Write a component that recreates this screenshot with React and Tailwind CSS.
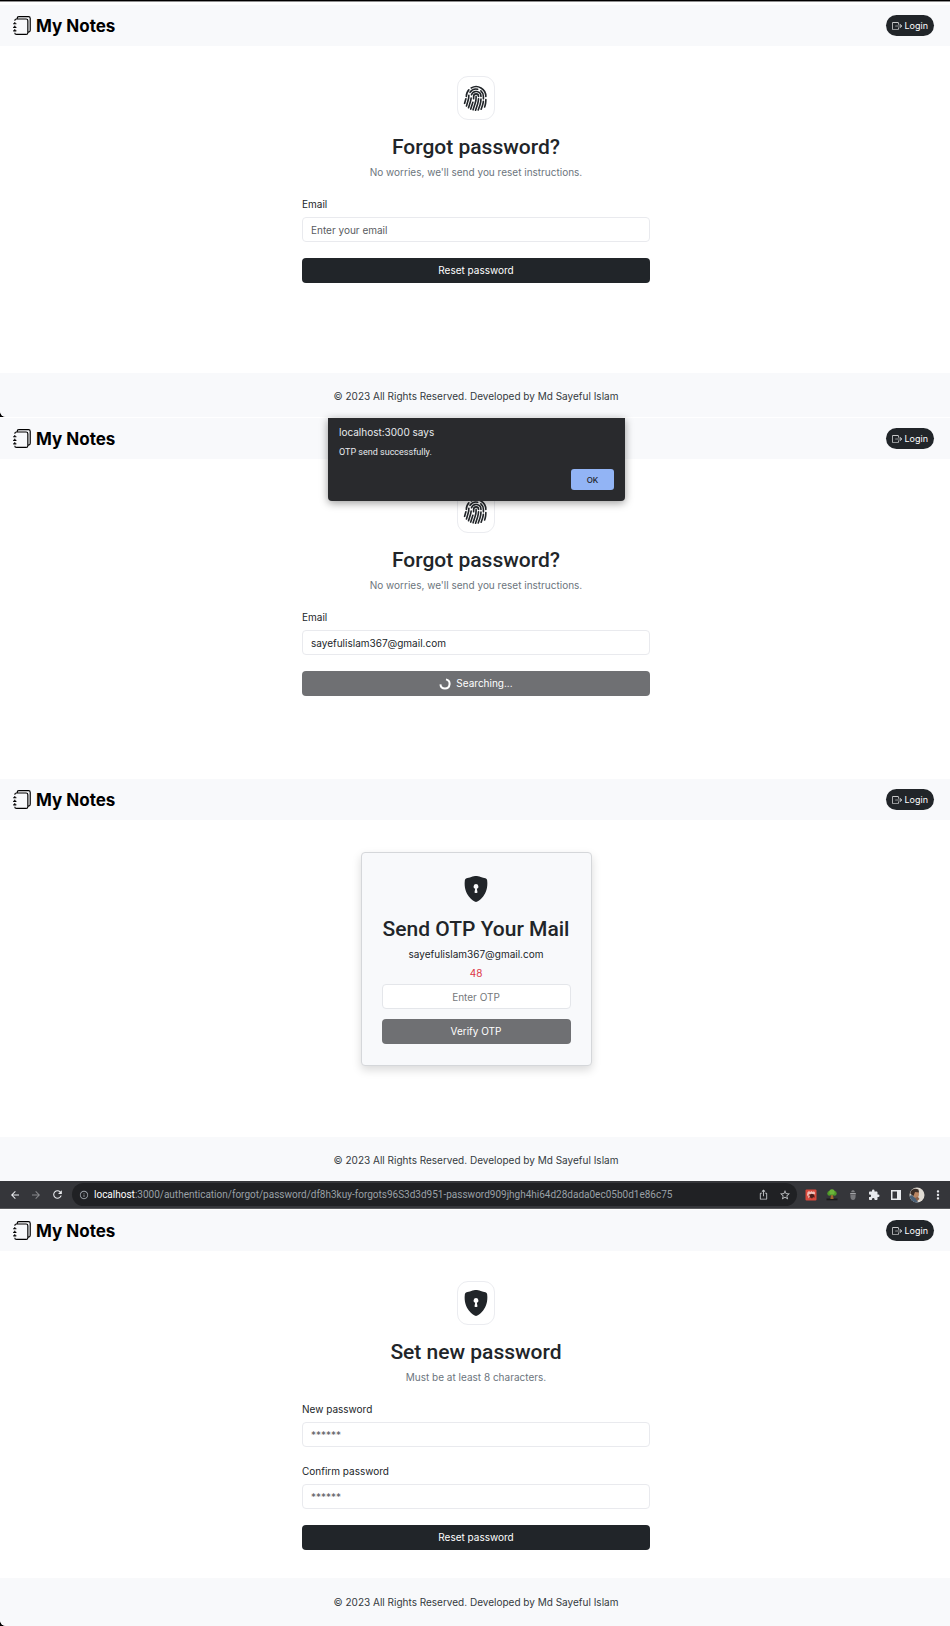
import { useId } from "react";
import { BsJournals, BsBoxArrowRight, BsFingerprint, BsShieldLockFill } from "react-icons/bs";
import {
  MdArrowBack,
  MdArrowForward,
  MdRefresh,
  MdInfoOutline,
  MdOutlineIosShare,
  MdStarBorder,
  MdMoreVert,
  MdExtension,
} from "react-icons/md";

function Header() {
  return (
    <header className="flex h-[41px] items-center justify-between bg-[#f8f9fb] pr-4 pl-[13px]">
      <a href="#home" className="flex items-center gap-1 text-[17px] leading-6 font-bold text-black">
        <BsJournals className="size-[19px]" />
        My Notes
      </a>
      <button
        type="button"
        className="flex h-[21px] items-center gap-[2px] rounded-full bg-[#212529] px-[6px] text-[9px] leading-4 text-white"
      >
        <BsBoxArrowRight className="size-[10px]" />
        Login
      </button>
    </header>
  );
}

function Footer({ className = "" }) {
  return (
    <footer
      className={`flex items-center justify-center bg-[#f8f9fb] pl-[2px] text-[10px] leading-4 text-[#343a40] ${className}`}
    >
      © 2023 All Rights Reserved. Developed by Md Sayeful Islam
    </footer>
  );
}

function IconTile({ children }) {
  return (
    <div className="flex h-[44px] w-[38px] items-center justify-center rounded-[11px] border border-[#ebecf0] text-[#212529]">
      {children}
    </div>
  );
}

function Title({ children }) {
  return (
    <h1 className="font-['Roboto',sans-serif] text-[21px] leading-7 font-medium whitespace-nowrap text-[#212529]">
      {children}
    </h1>
  );
}

function Field({ label, ...props }) {
  const id = useId();
  return (
    <div className="flex flex-col gap-1">
      <label htmlFor={id} className="text-[10px] leading-[18px] text-[#212529]">
        {label}
      </label>
      <input
        id={id}
        className="h-[25px] w-full rounded-[4px] border border-[#e9eaee] bg-white px-2 text-[10px] text-[#212529] placeholder:text-[#595c5f]"
        {...props}
      />
    </div>
  );
}

function SolidButton({ muted, children }) {
  return (
    <button
      type="button"
      className={`flex h-[25px] w-full items-center justify-center gap-[5px] rounded-[4px] text-[10px] text-white ${
        muted ? "bg-[#6f7073]" : "bg-[#212529]"
      }`}
    >
      {children}
    </button>
  );
}

function Panel({ icon, title, subtitle, className = "", children }) {
  return (
    <main className={`flex flex-col items-center bg-white pt-[30px] pr-4 pl-[18px] ${className}`}>
      <IconTile>{icon}</IconTile>
      <div className="mt-[13px] flex flex-col items-center gap-[3px]">
        <Title>{title}</Title>
        <p className="text-[10px] leading-4 text-[#6c757d]">{subtitle}</p>
      </div>
      <form className="mt-[15px] flex w-full max-w-[348px] flex-col">{children}</form>
    </main>
  );
}

function Spinner() {
  return (
    <svg viewBox="0 0 12 12" className="size-3" fill="none" stroke="currentColor" strokeWidth="2">
      <path d="M7 1.4A4.6 4.6 0 1 1 1.4 6.4" />
    </svg>
  );
}

function AlertDialog() {
  return (
    <div className="absolute inset-x-0 top-0 flex justify-center pl-[3px]">
      <div
        role="alertdialog"
        aria-label="localhost:3000 says"
        className="flex w-[297px] flex-col rounded-b-[4px] bg-[#292a2d] px-[11px] pt-[6px] pb-[11px] text-[#e8eaed] shadow-[0_2px_9px_rgba(0,0,0,0.4)]"
      >
        <p className="text-[10px] leading-4">localhost:3000 says</p>
        <p className="mt-[5px] font-['Roboto',sans-serif] text-[9px] leading-[14px]">OTP send successfully.</p>
        <button
          type="button"
          className="mt-[10px] h-[21px] w-[43px] self-end rounded-[3px] bg-[#92b4f5] text-[8px] font-medium text-[#202124]"
        >
          OK
        </button>
      </div>
    </div>
  );
}

function RedExtension() {
  return (
    <svg viewBox="0 0 12 12" className="size-3">
      <rect x=".5" y=".5" width="11" height="11" rx="1" fill="#d9493c" />
      <path d="M2.5 3.2 4 2l1.2 1L6.500 2l1.200 1L9 2.200l1.200 1.800L9.500 5.500 4 5 3 7.500 2 6z" fill="#f0c0b8" />
      <path d="M4.500 6 6.500 4.800 9 5.600 9.800 8.500 8 8.200 7 9.800 5.800 8.600 4.200 9.200z" fill="#4a1f1c" />
      <path d="M3 8l1-2 .8 1.600-.8 2z" fill="#f0c0b8" />
    </svg>
  );
}

function TreeExtension() {
  return (
    <svg viewBox="0 0 12 12" className="size-3">
      <path d="M.5 9.500h11v1.800H.5z" fill="#1b1b1b" />
      <path d="M5 6h2l.6 4H4.400z" fill="#a0682f" />
      <circle cx="3.600" cy="4.400" r="2.300" fill="#4f9a28" />
      <circle cx="8.400" cy="4.400" r="2.300" fill="#4f9a28" />
      <circle cx="6" cy="3" r="2.700" fill="#6cb53a" />
    </svg>
  );
}

function BugExtension() {
  return (
    <svg viewBox="0 0 12 12" className="size-3">
      <path d="M4.200 3.200C4.200 1.800 5 1.200 6 1.200s1.800.6 1.800 2z" fill="#7d7e81" />
      <path d="M3.200 4h5.600v1.400H3.200z" fill="#a4a5a8" />
      <path d="M3.400 6h5.200c.3 3-.8 5-2.600 5S3.100 9 3.400 6z" fill="#77787b" />
    </svg>
  );
}

function SidePanelIcon() {
  return (
    <svg viewBox="0 0 12 12" className="size-3" fill="#e8eaed">
      <path d="M1 1h10v10H1zM2.500 2.500v7h4.500v-7z" fillRule="evenodd" />
    </svg>
  );
}

function Avatar() {
  return (
    <svg viewBox="0 0 16 16" className="size-4">
      <clipPath id="avatar-round">
        <circle cx="8" cy="8" r="7.500" />
      </clipPath>
      <g clipPath="url(#avatar-round)">
        <rect width="16" height="16" fill="#e0dbd3" />
        <path d="M0 16V9l3-1 5 4 1 4z" fill="#4a6076" />
        <ellipse cx="7" cy="7" rx="3" ry="3.800" fill="#b98562" />
        <path d="M1.500 7c-1-4 4-6.500 8-4.500l.5 3L6 5 4.500 9z" fill="#3a2d27" />
        <path d="M6 10.500l3-.5 1.500 2-2.500 2z" fill="#8c5f44" />
      </g>
    </svg>
  );
}

function BrowserBar() {
  return (
    <nav className="flex h-7 items-center border-b border-[#5a5b5e] bg-[#35363a] pr-px pl-[9px] text-[#e8eaed]">
      <div className="flex items-center gap-[9px]">
        <button type="button" aria-label="Back">
          <MdArrowBack className="size-3" />
        </button>
        <button type="button" aria-label="Forward" className="text-[#87888b]">
          <MdArrowForward className="size-3" />
        </button>
        <button type="button" aria-label="Reload">
          <MdRefresh className="size-[13px]" />
        </button>
      </div>
      <div className="ml-2 flex h-[23px] flex-1 items-center rounded-full bg-[#202124] pr-[6px] pl-[7px]">
        <MdInfoOutline className="size-[10px] text-[#9aa0a6]" />
        <span className="ml-[5px] flex-1 font-['Roboto',sans-serif] text-[10px] leading-4 text-[#9aa0a6]">
          <span className="text-white">localhost</span>
          :3000/authentication/forgot/password/df8h3kuy-forgots96S3d3d951-password909jhgh4hi64d28dada0ec05b0d1e86c75
        </span>
        <div className="flex items-center gap-[10px] text-[#c4c7ca]">
          <MdOutlineIosShare className="size-[11px]" />
          <MdStarBorder className="size-3" />
        </div>
      </div>
      <div className="ml-[3px] grid w-[149px] grid-cols-7 place-items-center">
        <RedExtension />
        <TreeExtension />
        <BugExtension />
        <MdExtension className="size-3" />
        <SidePanelIcon />
        <Avatar />
        <MdMoreVert className="size-[14px]" />
      </div>
    </nav>
  );
}

export default function App() {
  return (
    <div className="bg-white font-['Inter',sans-serif]">
      <section className="bg-black pt-px">
        <div className="overflow-hidden rounded-bl-[6px] bg-white">
          <div className="border-t border-[#8f8f8f] pt-[3px]">
            <Header />
          </div>
          <Panel
            icon={<BsFingerprint className="size-[26px]" />}
            title="Forgot password?"
            subtitle="No worries, we'll send you reset instructions."
            className="pb-[90px]"
          >
            <Field label="Email" type="email" placeholder="Enter your email" />
            <div className="mt-4">
              <SolidButton>Reset password</SolidButton>
            </div>
          </Panel>
          <Footer className="pt-[15px] pb-[13px]" />
        </div>
      </section>

      <section className="relative border-t border-white">
        <Header />
        <Panel
          icon={<BsFingerprint className="size-[26px]" />}
          title="Forgot password?"
          subtitle="No worries, we'll send you reset instructions."
          className="pb-[83px]"
        >
          <Field label="Email" type="email" defaultValue="sayefulislam367@gmail.com" />
          <div className="mt-4">
            <SolidButton muted>
              <Spinner />
              Searching...
            </SolidButton>
          </div>
        </Panel>
        <AlertDialog />
      </section>

      <section>
        <Header />
        <main className="flex justify-center bg-white pt-8 pr-4 pb-[71px] pl-[18px]">
          <form className="flex w-[231px] flex-col items-center rounded-[4px] border border-[#d5d7da] bg-[#f8f9fb] px-5 pt-[23px] pb-[21px] shadow-[0_4px_10px_rgba(0,0,0,0.15)]">
            <BsShieldLockFill className="size-[26px] text-[#212529]" />
            <div className="mt-[13px]">
              <Title>Send OTP Your Mail</Title>
            </div>
            <p className="mt-[3px] text-[10px] leading-4 text-[#212529]">sayefulislam367@gmail.com</p>
            <p className="mt-[3px] text-[10px] leading-4 text-[#dc3545]">48</p>
            <input
              aria-label="OTP"
              placeholder="Enter OTP"
              className="mt-[3px] h-[25px] w-full rounded-[4px] border border-[#e4e6ea] bg-white text-center text-[10px] placeholder:text-[#75787b]"
            />
            <div className="mt-[10px] w-full">
              <SolidButton muted>Verify OTP</SolidButton>
            </div>
          </form>
        </main>
        <Footer className="pt-[15px] pb-[13px]" />
      </section>

      <section className="bg-black">
        <BrowserBar />
        <div className="overflow-hidden rounded-bl-[6px] bg-white pt-px">
          <Header />
          <Panel
            icon={<BsShieldLockFill className="size-[26px]" />}
            title="Set new password"
            subtitle="Must be at least 8 characters."
            className="pb-7"
          >
            <Field label="New password" type="password" placeholder="******" />
            <div className="mt-[15px]">
              <Field label="Confirm password" type="password" placeholder="******" />
            </div>
            <div className="mt-4">
              <SolidButton>Reset password</SolidButton>
            </div>
          </Panel>
          <Footer className="py-4" />
        </div>
      </section>
    </div>
  );
}
